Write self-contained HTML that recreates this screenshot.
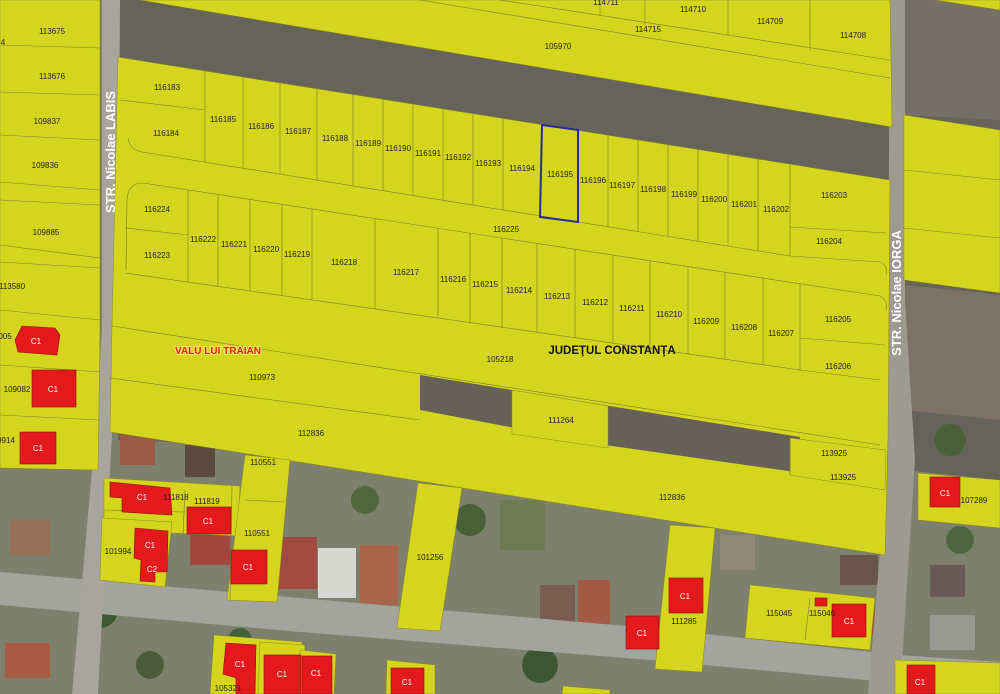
<!DOCTYPE html>
<html><head><meta charset="utf-8"><style>
html,body{margin:0;padding:0;width:1000px;height:694px;overflow:hidden;background:#77796a}
svg{display:block}
text{font-family:"Liberation Sans",sans-serif;font-size:8px;fill:#222;text-anchor:middle}
.c{fill:#fff;font-size:8px}
</style></head><body>
<svg width="1000" height="694" viewBox="0 0 1000 694" xmlns="http://www.w3.org/2000/svg">
<!-- background aerial -->
<rect x="0" y="0" width="1000" height="694" fill="#7c806c"/>
<polygon points="118,0 1000,0 1000,480 905,470 890,470 118,440" fill="#66635a"/>
<polygon points="905,0 1000,0 1000,120 905,115" fill="#757067"/>
<polygon points="905,285 1000,295 1000,420 905,410" fill="#7a7366"/>
<!-- residential texture -->
<rect x="120" y="435" width="35" height="30" fill="#9b5a45"/>
<rect x="185" y="445" width="30" height="32" fill="#5a4a40"/>
<rect x="275" y="537" width="42" height="52" fill="#a04a40"/>
<rect x="318" y="548" width="38" height="50" fill="#d8d8d2"/>
<rect x="360" y="545" width="38" height="60" fill="#a8654a"/>
<rect x="190" y="535" width="40" height="30" fill="#a04840"/>
<rect x="5" y="643" width="45" height="35" fill="#a85a45"/>
<rect x="10" y="520" width="40" height="35" fill="#98705a"/>
<rect x="540" y="585" width="35" height="45" fill="#7a5c50"/>
<rect x="578" y="580" width="32" height="48" fill="#a45a45"/>
<rect x="840" y="555" width="38" height="30" fill="#6a554d"/>
<rect x="930" y="565" width="35" height="32" fill="#6a5a55"/>
<rect x="860" y="610" width="20" height="25" fill="#a04a40"/>
<rect x="930" y="615" width="45" height="35" fill="#9a9a95"/>
<rect x="500" y="500" width="45" height="50" fill="#6f7a55"/>
<rect x="720" y="535" width="35" height="35" fill="#8f8a78"/>
<circle cx="100" cy="610" r="18" fill="#3f5a32"/>
<circle cx="240" cy="640" r="12" fill="#44603a"/>
<circle cx="540" cy="665" r="18" fill="#3d5633"/>
<circle cx="470" cy="520" r="16" fill="#4a6138"/>
<circle cx="950" cy="440" r="16" fill="#4a6038"/>
<circle cx="960" cy="540" r="14" fill="#4f6540"/>
<circle cx="365" cy="500" r="14" fill="#51673d"/>
<circle cx="150" cy="665" r="14" fill="#4a5c3a"/>
<!-- roads -->
<polygon points="0,572 300,598 650,628 900,655 1000,662 1000,690 900,683 650,660 300,632 0,605" fill="#a3a49c"/>
<polygon points="102,0 120,0 118,330 110,470 98,694 72,694 92,470 102,330" fill="#a7a59c"/>
<polygon points="890,0 905,0 905,300 915,460 900,694 868,694 888,460 888,300" fill="#9d9a90"/>
<!-- YELLOW parcels -->
<g fill="#d5d51e" stroke="#8a8a20" stroke-width="0.5">
<polygon points="0,0 100,0 100,330 98,470 0,468"/>
<polygon points="140,0 890,0 892,127"/>
<polygon points="935,0 1000,0 1000,10"/>
<polygon points="904,115 1000,130 1000,293 904,280"/>
<polygon points="118,57 890,180 888,440 885,555 110,432 112,326"/>
<polygon points="104,478 240,486 238,536 104,530"/>
<polygon points="102,518 172,522 165,587 100,580"/>
<polygon points="245,455 290,460 277,602 227,600"/>
<polygon points="418,483 462,488 440,631 397,628"/>
<polygon points="670,525 715,528 702,672 655,669"/>
<polygon points="750,585 875,598 870,650 745,638"/>
<polygon points="918,473 1000,480 1000,528 918,520"/>
<polygon points="214,635 302,642 300,694 210,694"/>
<polygon points="260,642 305,645 303,694 258,694"/>
<polygon points="300,650 336,654 334,694 298,694"/>
<polygon points="387,660 435,665 435,694 386,694"/>
<polygon points="895,660 1000,663 1000,694 895,694"/>
<polygon points="563,686 610,690 610,694 562,694"/>
</g>
<!-- dark holes -->
<polygon points="420,375 800,437 795,472 605,445 420,410" fill="#666157"/>
<polygon points="512,390 608,406 608,448 512,434" fill="#d5d51e" stroke="#8a8a20" stroke-width="0.5"/>
<polygon points="790,438 886,450 885,490 790,475" fill="#d5d51e" stroke="#8a8a20" stroke-width="0.5"/>
<!-- parcel lines -->
<g stroke="#7c7c30" stroke-width="0.6" fill="none">
<path d="M118,57 L890,180"/>
<path d="M128,138 Q130,150 142,152 L790,256"/>
<path d="M120,100 L205,110"/>
<path d="M143,183 Q128,183 127,200 L126,270 M143,183 L880,296 Q888,300 886,310"/>
<path d="M125,228 L188,235"/>
<path d="M125,273 L800,370 L880,380"/>
<path d="M112,326 L880,445"/>
<path d="M110,378 L420,420"/>
<path d="M790,256 L880,262 Q888,265 886,275 M790,165 L790,256 M790,227 L886,233"/>
<path d="M800,283 L800,370 M800,338 L885,345"/>
<path d="M205,70.7L205,162.4M243,76.6L243,168.5M280,82.4L280,174.4M317,88.2L317,180.3M353,93.8L353,186.1M383,98.6L383,190.9M413,103.3L413,195.7M443,108L443,200.5M473,112.7L473,205.3M503,117.4L503,210.1M578,129.2L578,222.1M608,133.9L608,226.9M638,138.6L638,231.7M668,143.3L668,236.5M698,148L698,241.3M728,152.7L728,246.1M758,157.4L758,250.9"/>
<path d="M188,189.9L188,282.4M218,194.5L218,286.8M250,199.4L250,291M282,204.3L282,295.6M312,208.8L312,299.9M375,218.5L375,309M438,228.1L438,318M470,233L470,322.7M502,237.9L502,327.3M537,243.3L537,332.3M575,249.1L575,337.8M613,254.9L613,343.3M650,260.5L650,348.6M688,266.4L688,354.1M725,272L725,359.4M763,277.8L763,364.9"/>
<path d="M0,45 L100,48 M0,92 L100,95 M0,135 L100,140 M0,182 L100,190 M0,200 L100,205 M0,245 L100,258 M0,262 L100,268 M0,310 L100,320 M0,365 L100,372 M0,415 L100,420"/>
<path d="M600,0 L600,15 M645,0 L645,25 M728,0 L728,35 M810,0 L810,50 M420,0 L890,78 M500,0 L890,60"/>
<path d="M904,170 L1000,180 M904,228 L1000,238"/>
<path d="M104,510 L185,512 M185,490 L183,535 M232,486 L230,600 M790,438 L790,475 M245,500 L285,502 M810,598 L805,640"/>
</g>
<!-- selected parcel -->
<polygon points="542,125 578,130 578,222 540,217" fill="none" stroke="#2a2aa0" stroke-width="2"/>
<!-- red buildings -->
<g fill="#e3191c" stroke="#8a1010" stroke-width="0.6">
<polygon points="22,326 55,328 60,335 57,355 18,352 15,340"/>
<rect x="32" y="370" width="44" height="37"/>
<rect x="20" y="432" width="36" height="32"/>
<polygon points="110,482 170,488 172,515 122,512 122,498 110,497"/>
<rect x="187" y="507" width="44" height="27"/>
<polygon points="135,528 168,531 167,572 155,572 155,582 140,581 141,560 134,558"/>
<rect x="231" y="550" width="36" height="34"/>
<rect x="626" y="616" width="33" height="33"/>
<rect x="669" y="578" width="34" height="35"/>
<rect x="832" y="604" width="34" height="33"/>
<rect x="815" y="598" width="12" height="8"/>
<rect x="930" y="477" width="30" height="30"/>
<polygon points="226,643 256,645 255,694 236,694 236,678 223,674"/>
<rect x="264" y="655" width="37" height="39"/>
<rect x="302" y="656" width="30" height="38"/>
<rect x="391" y="668" width="33" height="26"/>
<rect x="907" y="665" width="28" height="29"/>
</g>
<g class="c">
<text class="c" x="36" y="344">C1</text><text class="c" x="53" y="392">C1</text><text class="c" x="38" y="451">C1</text>
<text class="c" x="142" y="500">C1</text><text class="c" x="208" y="524">C1</text><text class="c" x="150" y="548">C1</text><text class="c" x="152" y="572">C2</text>
<text class="c" x="248" y="570">C1</text><text class="c" x="642" y="636">C1</text><text class="c" x="685" y="599">C1</text><text class="c" x="849" y="624">C1</text>
<text class="c" x="945" y="496">C1</text><text class="c" x="240" y="667">C1</text><text class="c" x="282" y="677">C1</text><text class="c" x="316" y="676">C1</text>
<text class="c" x="407" y="685">C1</text><text class="c" x="920" y="685">C1</text>
</g>
<!-- numbers -->
<text x="52" y="34">113675</text><text x="52" y="79">113676</text><text x="47" y="124">109837</text><text x="45" y="168">109836</text>
<text x="46" y="235">109885</text><text x="12" y="289">113580</text><text x="5" y="339">005</text><text x="17" y="392">109082</text><text x="6" y="443">9914</text><text x="3" y="45">4</text>
<text x="606" y="5">114711</text><text x="693" y="12">114710</text><text x="770" y="24">114709</text><text x="853" y="38">114708</text><text x="648" y="32">114715</text><text x="558" y="49">105970</text>
<text x="167" y="90">116183</text><text x="166" y="136">116184</text><text x="223" y="122">116185</text><text x="261" y="129">116186</text><text x="298" y="134">116187</text><text x="335" y="141">116188</text><text x="368" y="146">116189</text><text x="398" y="151">116190</text><text x="428" y="156">116191</text><text x="458" y="160">116192</text><text x="488" y="166">116193</text><text x="522" y="171">116194</text><text x="560" y="177">116195</text><text x="593" y="183">116196</text><text x="622" y="188">116197</text><text x="653" y="192">116198</text><text x="684" y="197">116199</text><text x="714" y="202">116200</text><text x="744" y="207">116201</text><text x="776" y="212">116202</text><text x="834" y="198">116203</text><text x="829" y="244">116204</text>
<text x="157" y="212">116224</text><text x="203" y="242">116222</text><text x="234" y="247">116221</text><text x="266" y="252">116220</text><text x="297" y="257">116219</text><text x="344" y="265">116218</text><text x="406" y="275">116217</text><text x="453" y="282">116216</text><text x="485" y="287">116215</text><text x="519" y="293">116214</text><text x="557" y="299">116213</text><text x="595" y="305">116212</text><text x="632" y="311">116211</text><text x="669" y="317">116210</text><text x="706" y="324">116209</text><text x="744" y="330">116208</text><text x="781" y="336">116207</text><text x="838" y="322">116205</text><text x="838" y="369">116206</text><text x="157" y="258">116223</text><text x="506" y="232">116225</text>
<text x="500" y="362">105218</text><text x="262" y="380">110973</text><text x="311" y="436">112836</text><text x="561" y="423">111264</text><text x="834" y="456">113925</text><text x="843" y="480">113925</text><text x="672" y="500">112836</text>
<text x="263" y="465">110551</text><text x="176" y="500">111818</text><text x="207" y="504">111819</text><text x="257" y="536">110551</text><text x="118" y="554">101994</text><text x="430" y="560">101256</text><text x="684" y="624">111285</text><text x="779" y="616">115045</text><text x="822" y="616">115046</text><text x="974" y="503">107289</text><text x="228" y="691">105321</text>
<!-- street names -->
<text transform="translate(115,152) rotate(-90)" style="font-size:13px;font-weight:bold;fill:#fff;font-family:'Liberation Sans Narrow','Liberation Sans',sans-serif">STR. Nicolae LABIS</text>
<text transform="translate(901,293) rotate(-90)" style="font-size:13px;font-weight:bold;fill:#fff;font-family:'Liberation Sans Narrow','Liberation Sans',sans-serif">STR. Nicolae IORGA</text>
<text x="218" y="354" style="font-size:10px;font-weight:bold;fill:#e0201a;stroke:#ffe860;stroke-width:2;paint-order:stroke">VALU LUI TRAIAN</text>
<text x="612" y="354" style="font-size:11.5px;font-weight:bold;fill:#111">JUDEŢUL CONSTANŢA</text>
</svg>
</body></html>
